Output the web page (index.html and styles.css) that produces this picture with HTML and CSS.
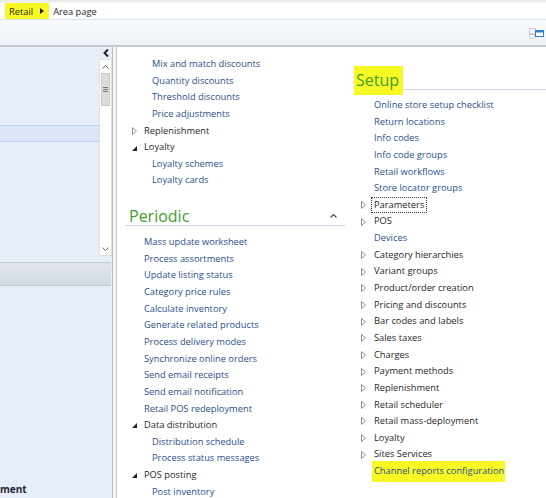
FILE: index.html
```html
<!DOCTYPE html>
<html>
<head>
    <title>Retail - Area page</title>
    <meta charset="utf-8">
    <link rel="stylesheet" href="styles.css">
</head>
<body>
<div class="page">
    <div class="top-strip"></div>
    <div class="crumbs">
        <span class="mark crumb-root">Retail<span class="crumb-arrow"></span></span>
        <span class="crumb">Area page</span>
    </div>
    <div class="toolbar">
        <svg class="tb-icon" width="16" height="11" viewBox="0 0 16 11">
            <rect x="0.5" y="0.5" width="6" height="6" fill="none" stroke="#9a9a9a" stroke-dasharray="1 1"/>
            <rect x="0.5" y="5.5" width="5" height="5" fill="none" stroke="#b0b0b0" stroke-dasharray="1 1"/>
            <rect x="6.5" y="2.5" width="8" height="6" fill="#fff" stroke="#2f7fd0"/>
            <rect x="6.5" y="2.5" width="8" height="2" fill="#2f7fd0"/>
        </svg>
    </div>
    <div class="main">
        <div class="nav">
            <div class="nav-top">
                <div class="nav-list">
                    <div class="nav-sel"></div>
                </div>
                <div class="nav-side">
                    <div class="collapse">
                        <svg width="7" height="8" viewBox="0 0 7 8"><path d="M5 0.5 L1.5 4 L5 7.5" fill="none" stroke="#222" stroke-width="2"/></svg>
                    </div>
                    <div class="scrollbar">
                        <div class="sb-btn">
                            <svg width="7" height="4" viewBox="0 0 7 4"><path d="M0.5 3.5 L3.5 0.5 L6.5 3.5" fill="none" stroke="#666"/></svg>
                        </div>
                        <div class="sb-thumb"><span></span><span></span><span></span></div>
                        <div class="sb-track"></div>
                        <div class="sb-btn">
                            <svg width="7" height="4" viewBox="0 0 7 4"><path d="M0.5 0.5 L3.5 3.5 L6.5 0.5" fill="none" stroke="#666"/></svg>
                        </div>
                    </div>
                </div>
            </div>
            <div class="nav-head"></div>
            <div class="nav-bottom"><span class="nav-cut">ment</span></div>
        </div>
        <div class="splitter"></div>
        <div class="content">
            <div class="col col-left">
                <div class="row sub link">Mix and match discounts</div>
                <div class="row sub link">Quantity discounts</div>
                <div class="row sub link">Threshold discounts</div>
                <div class="row sub link">Price adjustments</div>
                <div class="row group"><span class="tw closed"></span>Replenishment</div>
                <div class="row group"><span class="tw open"></span>Loyalty</div>
                <div class="row sub link">Loyalty schemes</div>
                <div class="row sub link">Loyalty cards</div>

                <div class="section-title">Periodic
                    <svg class="fold" width="7" height="4" viewBox="0 0 7 4"><path d="M0.5 3.5 L3.5 0.5 L6.5 3.5" fill="none" stroke="#555" stroke-width="1.3"/></svg>
                </div>
                <div class="row link">Mass update worksheet</div>
                <div class="row link">Process assortments</div>
                <div class="row link">Update listing status</div>
                <div class="row link">Category price rules</div>
                <div class="row link">Calculate inventory</div>
                <div class="row link">Generate related products</div>
                <div class="row link">Process delivery modes</div>
                <div class="row link">Synchronize online orders</div>
                <div class="row link">Send email receipts</div>
                <div class="row link">Send email notification</div>
                <div class="row link">Retail POS redeployment</div>
                <div class="row group"><span class="tw open"></span>Data distribution</div>
                <div class="row sub link">Distribution schedule</div>
                <div class="row sub link">Process status messages</div>
                <div class="row group"><span class="tw open"></span>POS posting</div>
                <div class="row sub link">Post inventory</div>
            </div>
            <div class="col col-right">
                <div class="section-title"><span class="mark mark-title">Setup</span></div>
                <div class="row link">Online store setup checklist</div>
                <div class="row link">Return locations</div>
                <div class="row link">Info codes</div>
                <div class="row link">Info code groups</div>
                <div class="row link">Retail workflows</div>
                <div class="row link">Store locator groups</div>
                <div class="row group"><span class="tw closed"></span><span class="focus">Parameters</span></div>
                <div class="row group"><span class="tw closed"></span>POS</div>
                <div class="row link">Devices</div>
                <div class="row group"><span class="tw closed"></span>Category hierarchies</div>
                <div class="row group"><span class="tw closed"></span>Variant groups</div>
                <div class="row group"><span class="tw closed"></span>Product/order creation</div>
                <div class="row group"><span class="tw closed"></span>Pricing and discounts</div>
                <div class="row group"><span class="tw closed"></span>Bar codes and labels</div>
                <div class="row group"><span class="tw closed"></span>Sales taxes</div>
                <div class="row group"><span class="tw closed"></span>Charges</div>
                <div class="row group"><span class="tw closed"></span>Payment methods</div>
                <div class="row group"><span class="tw closed"></span>Replenishment</div>
                <div class="row group"><span class="tw closed"></span>Retail scheduler</div>
                <div class="row group"><span class="tw closed"></span>Retail mass-deployment</div>
                <div class="row group"><span class="tw closed"></span>Loyalty</div>
                <div class="row group"><span class="tw closed"></span>Sites Services</div>
                <div class="row link"><span class="mark mark-item">Channel reports configuration</span></div>
            </div>
        </div>
    </div>
</div>
</body>
</html>
```

FILE: styles.css
```css
* {
    margin: 0;
    padding: 0;
    box-sizing: border-box;
}

body {
    font-family: "Open Sans", "Noto Sans", sans-serif;
    font-size: 9.3px;
    color: #1f1f1f;
    background: #fff;
}

.page {
    width: 546px;
    height: 498px;
    overflow: hidden;
    display: flex;
    flex-direction: column;
}

/* top bars */

.top-strip {
    height: 3px;
    background: #ececec;
    border-bottom: 1px solid #f6f6f6;
}

.crumbs {
    height: 17px;
    display: flex;
    align-items: center;
    border-bottom: 1px solid #dbe2ea;
}

.mark {
    background: #f8f825;
}

.crumb-root {
    display: flex;
    align-items: center;
    height: 16px;
    margin-left: 5px;
    padding: 0 5px 0 4px;
    border-radius: 1px;
}

.crumb-arrow {
    width: 0;
    height: 0;
    margin-left: 7px;
    border-left: 4px solid #222;
    border-top: 3px solid transparent;
    border-bottom: 3px solid transparent;
}

.crumb {
    margin-left: 4px;
}

.toolbar {
    height: 27px;
    display: flex;
    align-items: center;
    justify-content: flex-end;
    background: linear-gradient(#f8fafd, #eef3f9);
    border-bottom: 2px solid #c6c9cd;
}

.tb-icon {
    margin-top: 2px;
    margin-right: 1px;
}

/* main area */

.main {
    flex: 1;
    display: flex;
    min-height: 0;
}

.nav {
    width: 113px;
    display: flex;
    flex-direction: column;
    background: #e7eef8;
    border-right: 1px solid #bcc1c7;
}

.nav-top {
    height: 209px;
    display: flex;
}

.nav-list {
    flex: 1;
    padding-top: 78px;
}

.nav-sel {
    height: 17px;
    background: #d9e7f8;
    border-top: 1px solid #b9d3f1;
    border-bottom: 1px solid #b9d3f1;
}

.nav-side {
    width: 13px;
    display: flex;
    flex-direction: column;
}

.collapse {
    height: 12px;
    display: flex;
    align-items: center;
    justify-content: center;
    padding-left: 2px;
}

.scrollbar {
    flex: 1;
    display: flex;
    flex-direction: column;
    background: #fff;
    border: 1px solid #e0e0e0;
}

.sb-btn {
    height: 13px;
    display: flex;
    align-items: center;
    justify-content: center;
}

.sb-thumb {
    height: 33px;
    margin: 0 1px;
    background: #dcdcdc;
    border: 1px solid #c9c9c9;
    display: flex;
    flex-direction: column;
    align-items: center;
    justify-content: center;
    gap: 1px;
}

.sb-thumb span {
    width: 5px;
    height: 1px;
    background: #777;
}

.sb-track {
    flex: 1;
}

.nav-head {
    height: 24px;
    margin-top: 6px;
    margin-right: 1px;
    background: linear-gradient(#e1e6ec, #d3dae2);
    border-top: 1px solid #c3cad2;
    border-bottom: 1px solid #c3cad2;
}

.nav-bottom {
    flex: 1;
    display: flex;
    align-items: flex-end;
}

.nav-cut {
    font-weight: bold;
    font-size: 10px;
    color: #1f2a36;
    line-height: 14px;
    margin-bottom: 2px;
}

.splitter {
    width: 4px;
    background: #f2f2f2;
    border-right: 1px solid #c9c9c9;
}

.content {
    flex: 1;
    display: flex;
    background: #fff;
}

.col {
    overflow: hidden;
}

.col-left {
    width: 234px;
    padding-top: 9px;
}

.col-right {
    flex: 1;
    padding-top: 18px;
}

.row {
    height: 16.65px;
    line-height: 16.65px;
    white-space: nowrap;
    display: flex;
    align-items: center;
}

.link {
    color: #2a4f8b;
}

.group {
    color: #1f1f1f;
}

.col-left .row {
    padding-left: 27px;
}

.col-left .row.sub {
    padding-left: 35px;
}

.col-right .row {
    padding-left: 23px;
}

.tw {
    width: 12px;
    height: 8px;
    margin-left: -12px;
    flex: none;
}

.col-right .tw {
    width: 13px;
    margin-left: -13px;
}

.tw.closed {
    background: no-repeat 0 0 / 5px 8px url("data:image/svg+xml,%3Csvg xmlns='http://www.w3.org/2000/svg' width='5' height='8'%3E%3Cpath d='M0.5 0.5 L4.5 4 L0.5 7.5 Z' fill='none' stroke='%23909090'/%3E%3C/svg%3E");
}

.tw.open {
    background: no-repeat 0 2px / 5px 5px url("data:image/svg+xml,%3Csvg xmlns='http://www.w3.org/2000/svg' width='5' height='5'%3E%3Cpath d='M5 0 L5 5 L0 5 Z' fill='%23222'/%3E%3C/svg%3E");
}

.focus {
    border: 1px dotted #333;
    padding: 0 2px;
    margin-left: -3px;
    line-height: 14px;
}

.section-title {
    position: relative;
    height: 25px;
    line-height: 30px;
    font-size: 16px;
    color: #41a02f;
    border-bottom: 1px solid #cdd7e5;
}

.col-left .section-title {
    margin: 12px 6px 8px 8px;
    padding-left: 4px;
}

.col-right .section-title {
    margin: 0 0 7px 3px;
    padding-left: 2px;
}

.fold {
    position: absolute;
    right: 8px;
    top: 13px;
}

.mark-title {
    padding: 3px 4px 4px 2px;
    margin-left: -2px;
}

.mark-item {
    padding: 2px 1px;
    margin-left: -2px;
    padding-left: 2px;
}
```
